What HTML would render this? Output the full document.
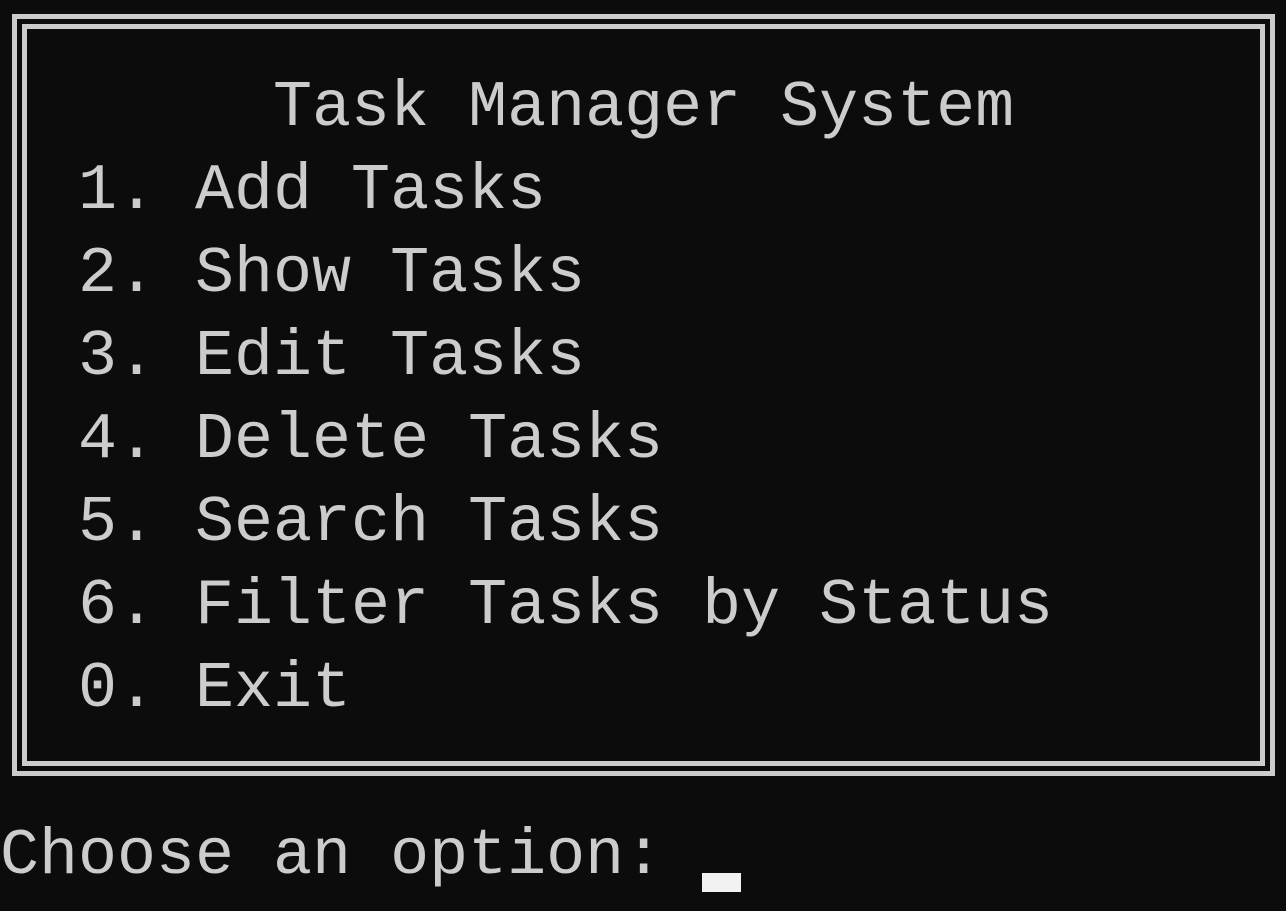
<!DOCTYPE html>
<html><head><style>
html,body{margin:0;padding:0;background:#0c0c0c;width:1286px;height:911px;overflow:hidden;}
.b{position:absolute;border:5px solid #cccccc;box-sizing:border-box;}
.t{position:absolute;left:0;font-family:"Liberation Mono",monospace;font-size:65px;color:#cccccc;white-space:pre;line-height:83px;}
.cur{position:absolute;left:702px;top:873px;width:39px;height:19px;background:#f2f2f2;}
</style></head><body>
<div class="b" style="left:12px;top:14px;width:1263px;height:762px"></div>
<div class="b" style="left:22px;top:24px;width:1243px;height:742px"></div>
<div class="t" style="top:67px">       Task Manager System
  1. Add Tasks
  2. Show Tasks
  3. Edit Tasks
  4. Delete Tasks
  5. Search Tasks
  6. Filter Tasks by Status
  0. Exit</div>
<div class="t" style="top:815px">Choose an option: </div>
<div class="cur"></div>
</body></html>
